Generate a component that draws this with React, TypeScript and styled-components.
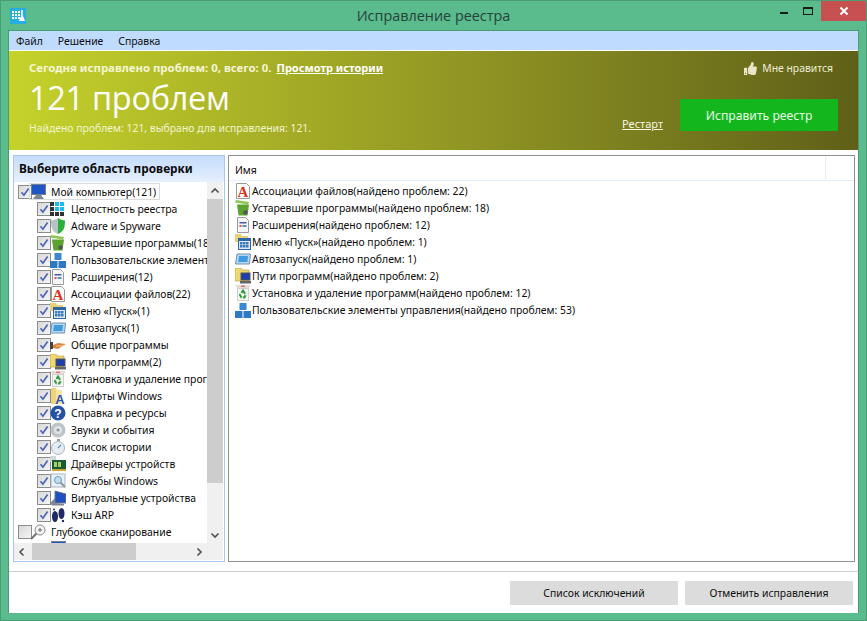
import React from 'react';
import styled, { createGlobalStyle } from 'styled-components';
import { FaThumbsUp } from 'react-icons/fa';

const GlobalStyle = createGlobalStyle`
  html, body {
    margin: 0;
    padding: 0;
    height: 100%;
    background: #5abb8d;
  }
  * {
    box-sizing: border-box;
  }
`;

const Win = styled.div`
  width: 867px;
  height: 621px;
  background: #5abb8d;
  border: 1px solid #4a9c76;
  padding: 0 7px 7px;
  display: flex;
  flex-direction: column;
  font-family: 'Noto Sans', sans-serif;
  font-size: 10.4px;
  color: #0c0c0c;
  overflow: hidden;
`;

const TitleBar = styled.div`
  height: 29px;
  margin: 0 -7px;
  display: grid;
  grid-template-columns: 1fr auto 1fr;
`;

const TitleLeft = styled.div`
  padding: 7px 0 0 9px;
`;

const TitleText = styled.div`
  font-size: 14.4px;
  line-height: 30px;
  color: #24423a;
  font-family: 'Open Sans', sans-serif;
`;

const Controls = styled.div`
  display: flex;
  justify-content: flex-end;
  align-items: flex-start;
`;

const CtlBtn = styled.div<{ $close?: boolean; $w: number }>`
  width: ${(p) => p.$w}px;
  height: 20px;
  display: flex;
  align-items: center;
  justify-content: center;
  background: ${(p) => (p.$close ? '#c75050' : 'transparent')};
`;

const MinGlyph = styled.div`
  width: 8px;
  height: 2px;
  margin-top: 4px;
  background: #1c1c1c;
`;

const MaxGlyph = styled.div`
  width: 10px;
  height: 8px;
  border: 1px solid #1c1c1c;
  border-top-width: 2px;
`;

const Content = styled.div`
  flex: 1;
  background: #fff;
  border: 1px solid #4a9c76;
  border-bottom: 0;
  display: flex;
  flex-direction: column;
  min-height: 0;
`;

const MenuBar = styled.div`
  height: 19px;
  background: #bfdbfe;
  display: flex;
  align-items: center;
  gap: 15px;
  padding-left: 7px;
  flex: none;
`;

const Banner = styled.div`
  margin-top: 1px;
  height: 99px;
  flex: none;
  background: linear-gradient(90deg, #c5d22b 0%, #8f9423 55%, #5f6018 100%);
  color: #fff;
  display: flex;
  justify-content: space-between;
  padding: 10px 20px 0 20px;
`;

const BannerLeft = styled.div`
  display: flex;
  flex-direction: column;
`;

const TodayLine = styled.div`
  font-weight: bold;
  font-size: 11.4px;
  line-height: 14px;
  color: #f4f6d5;
  display: flex;
  gap: 5px;
`;

const TodayLink = styled.span`
  text-decoration: underline;
  font-size: 11px;
  color: #fff;
`;

const BigNumber = styled.div`
  font-family: 'Open Sans', sans-serif;
  font-size: 32.5px;
  line-height: 44px;
  margin-top: 1px;
  letter-spacing: -0.3px;
`;

const FoundLine = styled.div`
  line-height: 14px;
  margin-top: 1px;
  color: #f2f5cf;
`;

const BannerRight = styled.div`
  display: flex;
  flex-direction: column;
  align-items: flex-end;
`;

const Like = styled.div`
  display: flex;
  align-items: center;
  gap: 5px;
  line-height: 14px;
  margin-right: 5px;
  color: #f0eed8;
  svg {
    color: #e9e5c6;
  }
`;

const ActionRow = styled.div`
  display: flex;
  align-items: flex-end;
  gap: 17px;
  margin-top: 24px;
`;

const Restart = styled.span`
  text-decoration: underline;
  font-size: 11px;
  color: #f7f7e4;
  line-height: 14px;
`;

const FixButton = styled.div`
  width: 158px;
  height: 32px;
  background: #14b61e;
  color: #e6f9e4;
  font-size: 12.2px;
  display: flex;
  align-items: center;
  justify-content: center;
`;

const Main = styled.div`
  flex: 1;
  display: flex;
  gap: 3px;
  padding: 5px 3px 0 4px;
  min-height: 0;
  height: 412px;
`;

const LeftPanel = styled.div`
  width: 212px;
  height: 407px;
  flex: none;
  border: 1px solid #a9c8ee;
  display: flex;
  flex-direction: column;
`;

const PanelHead = styled.div`
  height: 26px;
  flex: none;
  background: linear-gradient(180deg, #c4dcfc 0%, #e6f0fe 100%);
  font-weight: bold;
  font-size: 11.8px;
  padding-left: 5px;
  line-height: 24px;
`;

const TreeArea = styled.div`
  display: grid;
  grid-template-columns: 193px 16px;
  grid-template-rows: 361px 17px;
`;

const TreeList = styled.div`
  overflow: hidden;
  padding-top: 1px;
`;

const Row = styled.div<{ $child?: boolean }>`
  height: 17px;
  display: flex;
  align-items: center;
  white-space: nowrap;
  padding-left: ${(p) => (p.$child ? 23 : 4)}px;
`;

const Check = styled.div<{ $hidden?: boolean }>`
  width: 14px;
  height: 14px;
  flex: none;
  border: 1px solid #8c8c8c;
  background: linear-gradient(135deg, #d8d8d8, #f5f5f5);
  display: flex;
  align-items: center;
  justify-content: center;
  visibility: ${(p) => (p.$hidden ? 'hidden' : 'visible')};
`;

const RootLabel = styled.div<{ $box?: boolean }>`
  display: flex;
  align-items: center;
  height: 17px;
  padding-right: 3px;
  border: 1px solid ${(p) => (p.$box ? '#dcdcdc' : 'transparent')};
  margin-left: -3px;
`;

const IconSlot = styled.span`
  width: 16px;
  height: 16px;
  flex: none;
  display: inline-block;
`;

const RowText = styled.span`
  margin-left: 5px;
`;

const ChildIcon = styled.span`
  margin-left: -1px;
  height: 16px;
  display: inline-block;
`;

const VScroll = styled.div`
  grid-row: 1;
  grid-column: 2;
  background: #f0f0f0;
  display: flex;
  flex-direction: column;
`;

const HScroll = styled.div`
  grid-row: 2;
  grid-column: 1;
  background: #f0f0f0;
  display: flex;
`;

const Corner = styled.div`
  grid-row: 2;
  grid-column: 2;
  background: #f0f0f0;
`;

const ArrowBox = styled.div`
  width: 16px;
  height: 17px;
  flex: none;
  display: flex;
  align-items: center;
  justify-content: center;
`;

const VThumb = styled.div`
  height: 284px;
  background: #cdcdcd;
`;

const Spacer = styled.div`
  flex: 1;
`;

const HThumb = styled.div`
  width: 104px;
  margin-left: 2px;
  background: #cdcdcd;
`;

const RightPanel = styled.div`
  flex: 1;
  height: 407px;
  border: 1px solid #8f8f8f;
  display: flex;
  flex-direction: column;
`;

const ColumnHead = styled.div`
  height: 25px;
  flex: none;
  border-bottom: 1px solid #e4effb;
  display: flex;
`;

const ColumnName = styled.div`
  width: 597px;
  border-right: 1px solid #e4effb;
  padding-left: 6px;
  line-height: 28px;
`;

const ResultList = styled.div`
  padding: 1px 0 0 6px;
`;

const ResultRow = styled.div`
  height: 17px;
  display: flex;
  align-items: center;
  white-space: nowrap;
`;

const ResultText = styled.span`
  margin-left: 1px;
`;

const Footer = styled.div`
  margin-top: 9px;
  border-top: 1px solid #cfcfcf;
  height: 42px;
  flex: none;
  display: flex;
  justify-content: flex-end;
  gap: 7px;
  padding: 9px 5px 0 0;
`;

const FootButton = styled.div`
  width: 168px;
  height: 24px;
  background: #dcdcdc;
  display: flex;
  align-items: center;
  justify-content: center;
`;

const MenuItem = styled.span``;

const LogoIcon = () => (
  <svg width="16" height="16" viewBox="0 0 16 16">
    <rect width="16" height="16" rx="1" fill="#27aee0" />
    {[3, 6, 9].map((y) =>
      [2, 5, 8].map((x) => <rect key={`${x}${y}`} x={x} y={y} width="2" height="2" fill="#fff" />),
    )}
    <rect x="11" y="2" width="2" height="6" fill="#cfeef9" />
    <path d="M9 13l2-5h2l2 5z" fill="#fff" />
  </svg>
);

const CheckMark = () => (
  <svg width="12" height="12" viewBox="0 0 12 12">
    <path d="M2.5 6.2l2.4 3L9.6 2.4" fill="none" stroke="#4a63b8" strokeWidth="1.7" />
  </svg>
);

type IconKind =
  | 'pc' | 'registry' | 'shield' | 'trash' | 'blocks' | 'ext' | 'assoc' | 'start' | 'autorun' | 'shared'
  | 'paths' | 'recycle' | 'fonts' | 'help' | 'sound' | 'history' | 'drivers' | 'services' | 'virtual'
  | 'arp' | 'search';

const Icon: React.FC<{ kind: IconKind }> = ({ kind }) => {
  let body: React.ReactNode = null;
  switch (kind) {
    case 'pc':
      body = (
        <>
          <rect x="1" y="0" width="15" height="11" fill="#6f7f95" />
          <rect x="2" y="1" width="13" height="9" fill="#1f55c4" />
          <path d="M3 15h11l-3-4H6z" fill="#7d8794" />
        </>
      );
      break;
    case 'registry':
      body = (
        <>
          {[1, 6, 11].map((y) =>
            [0, 5, 10].map((x) => (
              <rect
                key={`${x}${y}`}
                x={x}
                y={y}
                width="4"
                height="4"
                fill={x > 0 && y < 11 ? '#19bdf0' : '#333'}
              />
            )),
          )}
        </>
      );
      break;
    case 'shield':
      body = (
        <>
          <path d="M8 0c2 1.500 5 2.500 7 2.500 0 7-1 11-7 13.500z" fill="#2cae3a" />
          <path d="M8 0C6 1.500 3 2.500 1 2.500 1 9.500 2 13.500 8 16z" fill="#b8c2c4" />
        </>
      );
      break;
    case 'trash':
      body = (
        <>
          <path d="M1 0l13 2-1 2.500L0 2.500z" fill="#8cc653" />
          <path d="M2 4.500h12l-1.500 11h-9z" fill="#5ca22e" />
          <circle cx="10.500" cy="12.500" r="2.200" fill="#555" />
        </>
      );
      break;
    case 'blocks':
      body = (
        <>
          <rect x="4.500" y="1" width="7" height="7" fill="#3c87d0" />
          <rect x="0" y="9" width="7.500" height="7" fill="#2f78c4" />
          <rect x="8.500" y="9" width="7.500" height="7" fill="#2f78c4" />
        </>
      );
      break;
    case 'ext':
      body = (
        <>
          <path d="M2.500.5h8l3 3v12h-11z" fill="#f6f6f6" stroke="#9a9a9a" />
          <rect x="4.500" y="5" width="7" height="1.500" fill="#4758a8" />
          <rect x="4.500" y="8" width="2" height="2" fill="#d6564b" />
          <rect x="7.500" y="8" width="4" height="2" fill="#5a8fd0" />
        </>
      );
      break;
    case 'assoc':
      body = (
        <>
          <path d="M1.500.5h10l3 3v12h-13z" fill="#fff" stroke="#9a9a9a" />
          <text x="8" y="14" textAnchor="middle" fontSize="15" fontWeight="bold" fontFamily="Liberation Serif, serif" fill="#d8341c">
            A
          </text>
        </>
      );
      break;
    case 'start':
      body = (
        <>
          <path d="M0 0h6l1 2h6v6H0z" fill="#e8cf7a" />
          <rect x="3" y="4" width="13" height="12" fill="#2f66a8" />
          <rect x="4" y="7" width="11" height="8" fill="#dfe9f4" />
          {[8, 11].map((y) =>
            [5, 8, 11].map((x) => <rect key={`${x}${y}`} x={x} y={y} width="2.500" height="2.500" fill="#3b78b8" />),
          )}
        </>
      );
      break;
    case 'autorun':
      body = (
        <>
          <path d="M2 3h13.500l-1 10H.5z" fill="#b9d6ef" stroke="#6e93b8" />
          <path d="M4 5h9l-.6 6H3.200z" fill="#3f9be0" />
        </>
      );
      break;
    case 'shared':
      body = (
        <>
          <rect x="0" y="5" width="3" height="7" fill="#444" />
          <path d="M3 8l5-2 8 1-5 3-3 2-5-1z" fill="#d9863a" />
          <path d="M6 9h5l5-1.500" stroke="#eec79a" fill="none" />
        </>
      );
      break;
    case 'paths':
      body = (
        <>
          <path d="M0 0h6l1 2h7v11H0z" fill="#f0d870" stroke="#b49a36" strokeWidth=".6" />
          <rect x="6" y="5" width="9" height="7" fill="#1f3fa8" stroke="#555" />
          <rect x="5" y="13" width="11" height="2.500" fill="#666" />
        </>
      );
      break;
    case 'recycle':
      body = (
        <>
          <path d="M0 0h16l-3 4H3z" fill="#e3dcd8" />
          <path d="M6 1.200h4" stroke="#d24a3a" />
          <rect x="2.500" y="3.500" width="11" height="12" fill="#f5f5f5" stroke="#cfcfcf" />
          <path d="M8 5.500l2.800 4.500-1.500 2.500H6.500L5 10z" fill="none" stroke="#2d9c3c" strokeWidth="2" strokeDasharray="4 1.500" />
        </>
      );
      break;
    case 'fonts':
      body = (
        <>
          <path d="M1 0h5l1 2v14H1z" fill="#eed27c" />
          <path d="M6 2h6v14H6z" fill="#f6e4a4" />
          <text x="10" y="16" textAnchor="middle" fontSize="13" fontWeight="bold" fontFamily="Liberation Sans, sans-serif" fill="#2b55b4">
            A
          </text>
        </>
      );
      break;
    case 'help':
      body = (
        <>
          <circle cx="8" cy="8" r="7.500" fill="#2452a8" />
          <text x="8" y="12.500" textAnchor="middle" fontSize="12" fontWeight="bold" fontFamily="Liberation Sans, sans-serif" fill="#fff">
            ?
          </text>
        </>
      );
      break;
    case 'sound':
      body = (
        <>
          <circle cx="8" cy="8" r="7.500" fill="#bcc3c9" />
          <circle cx="8" cy="8" r="4" fill="#dfe3e6" />
          <circle cx="8" cy="8" r="1.500" fill="#8d969e" />
        </>
      );
      break;
    case 'history':
      body = (
        <>
          <rect x="7" y="0" width="3" height="2" fill="#9a9a9a" />
          <circle cx="8" cy="9" r="6.500" fill="#e6edf2" stroke="#a9b4bc" />
          <path d="M8 9l3-3" stroke="#5a8fc0" strokeWidth="1.200" />
        </>
      );
      break;
    case 'drivers':
      body = (
        <>
          <rect x="0" y="0" width="6" height="6" fill="#cfd8dc" />
          <rect x="2" y="4" width="14" height="10" fill="#1b5d32" />
          <rect x="4" y="6" width="3" height="5" fill="#a8cf6a" />
          <rect x="8" y="6" width="3" height="5" fill="#a8cf6a" />
          <rect x="2" y="13" width="14" height="2" fill="#c9a23a" />
        </>
      );
      break;
    case 'services':
      body = (
        <>
          <rect x="1" y="1" width="14" height="13" fill="#e9eff5" stroke="#aab6c2" />
          <circle cx="8" cy="7" r="3.500" fill="#bfe0f4" stroke="#6a9cc0" />
          <path d="M10.500 9.500L15 14" stroke="#8a97a3" strokeWidth="2" />
        </>
      );
      break;
    case 'virtual':
      body = (
        <>
          <path d="M5 1l11 3v9H5z" fill="#1f4fc0" stroke="#6d7784" />
          <path d="M0 13l5-5v5l9 1v1.500H2z" fill="#7d8794" />
        </>
      );
      break;
    case 'arp':
      body = (
        <>
          <ellipse cx="5" cy="9.500" rx="3" ry="5.500" fill="#1f2a66" />
          <ellipse cx="11.500" cy="6.500" rx="3" ry="5.500" fill="#1f2a66" />
          <circle cx="4" cy="2.500" r="1" fill="#1f2a66" />
          <circle cx="13" cy="14" r="1.200" fill="#1f2a66" />
        </>
      );
      break;
    case 'search':
      body = (
        <>
          <circle cx="10" cy="6" r="5" fill="#f4f4f4" stroke="#8a8a8a" />
          <path d="M8 6h4M10 4v4" stroke="#666" />
          <path d="M6.500 9.500L1 15" stroke="#777" strokeWidth="2.200" />
        </>
      );
      break;
  }
  return (
    <IconSlot>
      <svg width="16" height="16" viewBox="0 0 16 16">
        {body}
      </svg>
    </IconSlot>
  );
};

const treeItems: { kind: IconKind; label: string }[] = [
  { kind: 'registry', label: 'Целостность реестра' },
  { kind: 'shield', label: 'Adware и Spyware' },
  { kind: 'trash', label: 'Устаревшие программы(18)' },
  { kind: 'blocks', label: 'Пользовательские элементы управления(53)' },
  { kind: 'ext', label: 'Расширения(12)' },
  { kind: 'assoc', label: 'Ассоциации файлов(22)' },
  { kind: 'start', label: 'Меню «Пуск»(1)' },
  { kind: 'autorun', label: 'Автозапуск(1)' },
  { kind: 'shared', label: 'Общие программы' },
  { kind: 'paths', label: 'Пути программ(2)' },
  { kind: 'recycle', label: 'Установка и удаление программ(12)' },
  { kind: 'fonts', label: 'Шрифты Windows' },
  { kind: 'help', label: 'Справка и ресурсы' },
  { kind: 'sound', label: 'Звуки и события' },
  { kind: 'history', label: 'Список истории' },
  { kind: 'drivers', label: 'Драйверы устройств' },
  { kind: 'services', label: 'Службы Windows' },
  { kind: 'virtual', label: 'Виртуальные устройства' },
  { kind: 'arp', label: 'Кэш ARP' },
];

const results: { kind: IconKind; label: string }[] = [
  { kind: 'assoc', label: 'Ассоциации файлов(найдено проблем: 22)' },
  { kind: 'trash', label: 'Устаревшие программы(найдено проблем: 18)' },
  { kind: 'ext', label: 'Расширения(найдено проблем: 12)' },
  { kind: 'start', label: 'Меню «Пуск»(найдено проблем: 1)' },
  { kind: 'autorun', label: 'Автозапуск(найдено проблем: 1)' },
  { kind: 'paths', label: 'Пути программ(найдено проблем: 2)' },
  { kind: 'recycle', label: 'Установка и удаление программ(найдено проблем: 12)' },
  { kind: 'blocks', label: 'Пользовательские элементы управления(найдено проблем: 53)' },
];

const Chevron: React.FC<{ dir: 'up' | 'down' | 'left' | 'right' }> = ({ dir }) => {
  const d = {
    up: 'M1.500 6.500L5 3l3.500 3.500',
    down: 'M1.500 3.500L5 7l3.500-3.500',
    left: 'M6.500 1.500L3 5l3.500 3.500',
    right: 'M3.500 1.500L7 5 3.500 8.500',
  }[dir];
  return (
    <svg width="10" height="10" viewBox="0 0 10 10">
      <path d={d} fill="none" stroke="#505050" strokeWidth="1.600" />
    </svg>
  );
};

export default function App() {
  return (
    <>
      <GlobalStyle />
      <Win>
        <TitleBar>
          <TitleLeft>
            <LogoIcon />
          </TitleLeft>
          <TitleText>Исправление реестра</TitleText>
          <Controls>
            <CtlBtn $w={21}>
              <MinGlyph />
            </CtlBtn>
            <CtlBtn $w={27}>
              <MaxGlyph />
            </CtlBtn>
            <CtlBtn $w={45} $close>
              <svg width="10" height="10" viewBox="0 0 10 10">
                <path d="M1.500 1.500l7 7M8.500 1.500l-7 7" stroke="#fff" strokeWidth="2" />
              </svg>
            </CtlBtn>
          </Controls>
        </TitleBar>
        <Content>
          <MenuBar>
            <MenuItem>Файл</MenuItem>
            <MenuItem>Решение</MenuItem>
            <MenuItem>Справка</MenuItem>
          </MenuBar>
          <Banner>
            <BannerLeft>
              <TodayLine>
                <span>Сегодня исправлено проблем: 0, всего: 0.</span>
                <TodayLink>Просмотр истории</TodayLink>
              </TodayLine>
              <BigNumber>121 проблем</BigNumber>
              <FoundLine>Найдено проблем: 121, выбрано для исправления: 121.</FoundLine>
            </BannerLeft>
            <BannerRight>
              <Like>
                <FaThumbsUp size={13} />
                <span>Мне нравится</span>
              </Like>
              <ActionRow>
                <Restart>Рестарт</Restart>
                <FixButton>Исправить реестр</FixButton>
              </ActionRow>
            </BannerRight>
          </Banner>
          <Main>
            <LeftPanel>
              <PanelHead>Выберите область проверки</PanelHead>
              <TreeArea>
                <TreeList>
                  <Row>
                    <Check>
                      <CheckMark />
                    </Check>
                    <RootLabel $box>
                      <Icon kind="pc" />
                      <RowText>Мой компьютер(121)</RowText>
                    </RootLabel>
                  </Row>
                  {treeItems.map((item) => (
                    <Row $child key={item.label}>
                      <Check>
                        <CheckMark />
                      </Check>
                      <ChildIcon>
                        <Icon kind={item.kind} />
                      </ChildIcon>
                      <RowText>{item.label}</RowText>
                    </Row>
                  ))}
                  <Row>
                    <Check />
                    <RootLabel>
                      <Icon kind="search" />
                      <RowText>Глубокое сканирование</RowText>
                    </RootLabel>
                  </Row>
                  <Row $child>
                    <Check $hidden />
                    <ChildIcon>
                      <Icon kind="pc" />
                    </ChildIcon>
                  </Row>
                </TreeList>
                <VScroll>
                  <ArrowBox>
                    <Chevron dir="up" />
                  </ArrowBox>
                  <VThumb />
                  <Spacer />
                  <ArrowBox>
                    <Chevron dir="down" />
                  </ArrowBox>
                </VScroll>
                <HScroll>
                  <ArrowBox>
                    <Chevron dir="left" />
                  </ArrowBox>
                  <HThumb />
                  <Spacer />
                  <ArrowBox>
                    <Chevron dir="right" />
                  </ArrowBox>
                </HScroll>
                <Corner />
              </TreeArea>
            </LeftPanel>
            <RightPanel>
              <ColumnHead>
                <ColumnName>Имя</ColumnName>
              </ColumnHead>
              <ResultList>
                {results.map((item) => (
                  <ResultRow key={item.label}>
                    <Icon kind={item.kind} />
                    <ResultText>{item.label}</ResultText>
                  </ResultRow>
                ))}
              </ResultList>
            </RightPanel>
          </Main>
          <Footer>
            <FootButton>Список исключений</FootButton>
            <FootButton>Отменить исправления</FootButton>
          </Footer>
        </Content>
      </Win>
    </>
  );
}
